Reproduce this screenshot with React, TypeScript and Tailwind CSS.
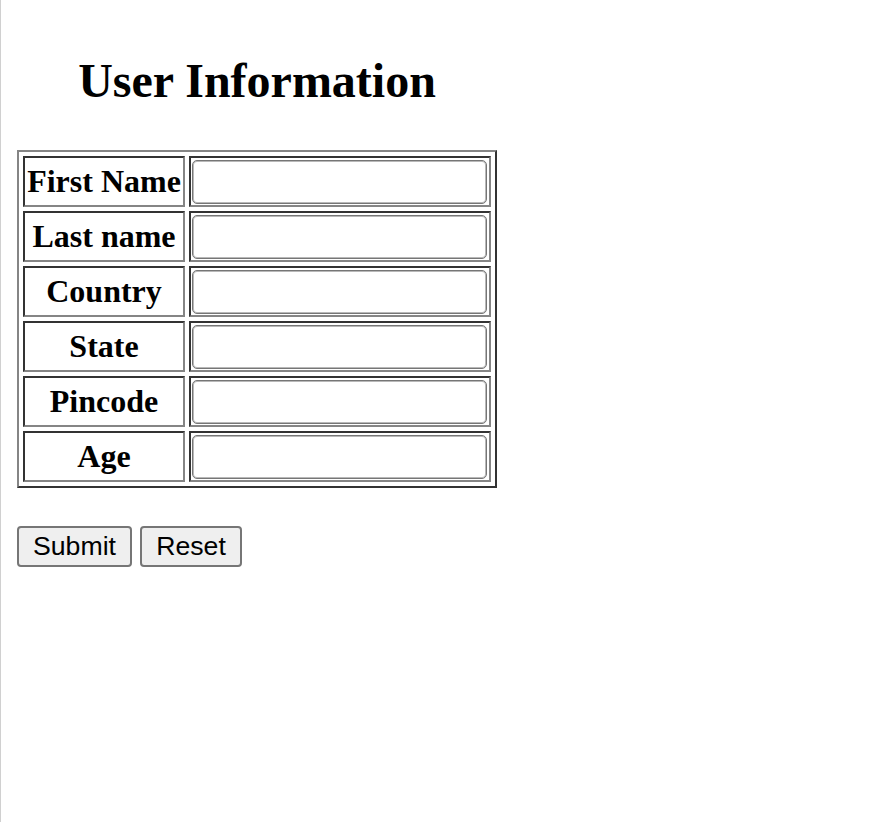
import React from 'react';

const fields = ['First Name', 'Last name', 'Country', 'State', 'Pincode', 'Age'];

const App: React.FC = () => {
  return (
    <div className="min-h-[822px] bg-white border-l border-[#d0d0d0] pl-[16px]">
      <div className="w-[480px] pt-[54px]">
        <h2 className="text-center text-[48px] leading-[53px] font-bold text-black font-['Liberation_Serif','Times_New_Roman',serif]">
          User Information
        </h2>
      </div>

      <form className="mt-[43px]" onSubmit={e => e.preventDefault()}>
        {/* table with the old border="1" look: outset outer, inset cells */}
        <div className="w-[480px] grid grid-cols-[162px_302px] gap-[4px] p-[4px] border-2 border-t-[#858585] border-l-[#858585] border-b-[#333333] border-r-[#333333]">
          {fields.map(label => (
            <React.Fragment key={label}>
              <div className="h-[51px] flex items-center justify-center pb-[2px] border-2 border-t-[#333333] border-l-[#333333] border-b-[#858585] border-r-[#858585]">
                <span className="text-[32px] leading-none font-bold text-black whitespace-nowrap font-['Liberation_Serif','Times_New_Roman',serif]">
                  {label}
                </span>
              </div>
              <div className="h-[51px] flex items-center pl-[1px] border-2 border-t-[#333333] border-l-[#333333] border-b-[#858585] border-r-[#858585]">
                <input
                  type="text"
                  className="w-[295px] h-[44px] rounded-[5px] border border-[#767676] shadow-[inset_0_0_0_1px_#b8b8b8] bg-white px-[4px] text-[26px] outline-none font-['Liberation_Sans',Arial,sans-serif]"
                />
              </div>
            </React.Fragment>
          ))}
        </div>

        <div className="mt-[38px] flex gap-[8px]">
          <button
            type="submit"
            className="h-[41px] w-[115px] rounded-[4px] border-2 border-[#767676] bg-[#efefef] text-[26.67px] leading-none text-black font-['Liberation_Sans',Arial,sans-serif]"
          >
            Submit
          </button>
          <button
            type="reset"
            className="h-[41px] w-[102px] rounded-[4px] border-2 border-[#767676] bg-[#efefef] text-[26.67px] leading-none text-black font-['Liberation_Sans',Arial,sans-serif]"
          >
            Reset
          </button>
        </div>
      </form>
    </div>
  );
};

export default App;
